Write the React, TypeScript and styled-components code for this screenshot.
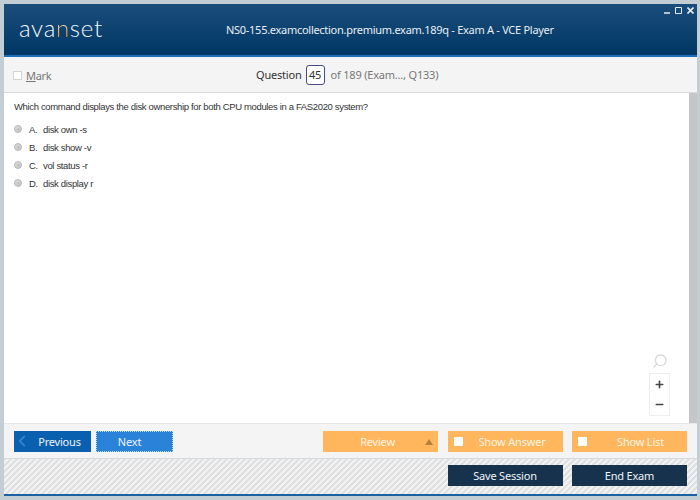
import React from 'react';
import styled, { createGlobalStyle } from 'styled-components';
import { ChevronLeft, Minus, Plus, Search } from 'lucide-react';

const GlobalStyle = createGlobalStyle`
	html,
	body {
		margin: 0;
		padding: 0;
		width: 700px;
		height: 500px;
		overflow: hidden;
		background: #c2ced4;
	}

	* {
		box-sizing: border-box;
	}
`;

const uiFont = `'Noto Sans', 'Open Sans', sans-serif`;

const Page = styled.div`
	width: 700px;
	height: 500px;
	padding: 4px 3px 4px 4px;
	font-family: ${uiFont};
`;

const Window = styled.div`
	height: 492px;
	display: flex;
	flex-direction: column;
	background: #fff;
`;

const Header = styled.header`
	height: 53px;
	flex: none;
	position: relative;
	display: flex;
	align-items: center;
	background: linear-gradient(180deg, #1b4d7b 0%, #003764 100%);
	border-bottom: 2px solid #1b6fb8;
`;

const Logo = styled.div`
	width: 222px;
	padding: 0 0 4px 15px;
	font-family: 'Lato', sans-serif;
	font-weight: 300;
	font-size: 24px;
	line-height: 30px;
	letter-spacing: 0.7px;
	color: #f2f6f9;

	span {
		background: linear-gradient(180deg, #f4e2c0 35%, #f09a20 75%);
		-webkit-background-clip: text;
		background-clip: text;
		color: transparent;
	}
`;

const Title = styled.h1`
	margin: 0;
	font-size: 11px;
	font-weight: 400;
	letter-spacing: -0.28px;
	color: #e8eef3;
	white-space: nowrap;
`;

const WindowControls = styled.div`
	position: absolute;
	top: 3px;
	right: 3px;
	display: flex;
	align-items: flex-end;
	gap: 5px;
	color: #e6edf2;

	svg {
		display: block;
	}
`;

const Toolbar = styled.div`
	height: 36px;
	flex: none;
	display: flex;
	align-items: center;
	background: #f4f4f4;
	border-bottom: 1px solid #dcdcdc;
`;

const MarkLabel = styled.label`
	width: 252px;
	padding: 1px 0 0 9px;
	display: flex;
	align-items: center;
	gap: 4px;
	font-size: 11px;
	letter-spacing: -0.3px;
	color: #777;

	u {
		text-underline-offset: 1px;
	}
`;

const MarkBox = styled.span`
	width: 9px;
	height: 9px;
	background: #fff;
	border: 1px solid #d4d4d4;
`;

const Counter = styled.div`
	display: flex;
	align-items: center;
	font-size: 11px;
	letter-spacing: -0.2px;
	color: #777;
	white-space: nowrap;

	b {
		font-weight: 400;
		color: #333;
	}
`;

const CurrentNumber = styled.span`
	width: 19px;
	height: 20px;
	margin: 0 6px 0 4px;
	display: flex;
	align-items: center;
	justify-content: center;
	font-size: 11px;
	color: #333;
	background: #fff;
	border: 1px solid #4a4a80;
	border-radius: 3px;
`;

const Body = styled.div`
	flex: 1;
	display: flex;
	min-height: 0;
`;

const Content = styled.main`
	flex: 1;
	position: relative;
	padding: 8px 10px;
	font-family: 'Liberation Sans', Arial, sans-serif;
	font-size: 9.5px;
	letter-spacing: -0.35px;
	color: #333;
`;

const Scrollbar = styled.div`
	width: 8px;
	flex: none;
	background: #c6c6c6;
`;

const Prompt = styled.p`
	margin: 0 0 10px;
	line-height: 12px;
`;

const Answers = styled.ul`
	margin: 0;
	padding: 0;
	list-style: none;
	display: flex;
	flex-direction: column;
	gap: 6px;
`;

const Answer = styled.li`
	height: 12px;
	display: flex;
	align-items: center;
`;

const Radio = styled.span`
	width: 8px;
	height: 8px;
	margin-right: 7px;
	border-radius: 50%;
	border: 1px solid #b4b4b4;
	background: radial-gradient(circle at 60% 60%, #bcbcbc, #ececec);
`;

const Letter = styled.span`
	width: 14px;
`;

const ZoomTools = styled.div`
	position: absolute;
	right: 19px;
	bottom: 7px;
	width: 21px;
	display: flex;
	flex-direction: column;
	align-items: center;
`;

const ZoomBox = styled.div`
	width: 21px;
	height: 43px;
	margin-top: 4px;
	display: flex;
	flex-direction: column;
	align-items: center;
	justify-content: space-around;
	color: #444;
	border: 1px solid #eee;
`;

const ActionBar = styled.div`
	height: 36px;
	flex: none;
	display: flex;
	align-items: center;
	justify-content: space-between;
	padding: 0 10px;
	background: #f4f4f4;
	border-top: 1px solid #e6e6e6;
	border-bottom: 1px solid #d4dbe0;
`;

const ButtonGroup = styled.div<{ $gap: number }>`
	display: flex;
	gap: ${(p) => p.$gap}px;
`;

const Button = styled.button<{ $w: number; $kind: 'previous' | 'next' | 'orange' | 'navy'; $shift?: number }>`
	width: ${(p) => p.$w}px;
	height: 21px;
	position: relative;
	padding: 0 ${(p) => Math.max(-(p.$shift ?? 0) * 2, 0)}px 0 ${(p) => Math.max((p.$shift ?? 0) * 2, 0)}px;
	font-family: ${uiFont};
	font-size: 11px;
	letter-spacing: -0.2px;
	color: ${(p) => (p.$kind === 'orange' ? '#fdf3e2' : '#eef4f9')};
	background: ${(p) =>
		p.$kind === 'previous' ? '#0a5fae' : p.$kind === 'next' ? '#2a83d8' : p.$kind === 'orange' ? '#ffb65c' : '#17324d'};
	border: ${(p) => (p.$kind === 'next' ? '1px dotted #bcd8f2' : 'none')};
`;

const ButtonIcon = styled.span`
	position: absolute;
	left: -1px;
	top: 50%;
	transform: translateY(-50%);
	display: flex;
	color: #2a83d8;
`;

const CheckMark = styled.span`
	position: absolute;
	left: 6px;
	top: 6px;
	width: 9px;
	height: 9px;
	border-radius: 1px;
	background: #fff;
`;

const ReviewArrow = styled.span`
	position: absolute;
	right: 5px;
	top: 8px;
	width: 0;
	height: 0;
	border-left: 4px solid transparent;
	border-right: 4px solid transparent;
	border-bottom: 6px solid #b5803c;
`;

const Footer = styled.footer`
	height: 37px;
	flex: none;
	display: flex;
	align-items: center;
	justify-content: flex-end;
	padding: 0 10px 2px;
	background-color: #f2f2f2;
	background-image: linear-gradient(
		135deg,
		#e0e0e0 0 17%,
		transparent 17% 50%,
		#e0e0e0 50% 67%,
		transparent 67% 100%
	);
	background-size: 6px 6px;
	border-bottom: 2px solid #1b62a5;
`;

const answers = [
	['A.', 'disk own -s'],
	['B.', 'disk show -v'],
	['C.', 'vol status -r'],
	['D.', 'disk display r'],
];

const App = (): React.FunctionComponentElement<JSX.Element> => {
	return (
		<Page>
			<GlobalStyle />
			<Window>
				<Header>
					<Logo>
						ava<span>n</span>set
					</Logo>
					<Title>NS0-155.examcollection.premium.exam.189q - Exam A - VCE Player</Title>
					<WindowControls>
						<svg width="6" height="3" viewBox="0 0 6 3">
							<path d="M0 2h6" stroke="currentColor" strokeWidth="1.5" />
						</svg>
						<svg width="7" height="7" viewBox="0 0 7 7" fill="none">
							<path d="M.5.5h6v6h-6z" stroke="currentColor" />
						</svg>
						<svg width="7" height="7" viewBox="0 0 7 7">
							<path d="M.5.5l6 6M6.5.5l-6 6" stroke="currentColor" strokeWidth="1.6" />
						</svg>
					</WindowControls>
				</Header>
				<Toolbar>
					<MarkLabel>
						<MarkBox />
						<span>
							<u>M</u>ark
						</span>
					</MarkLabel>
					<Counter>
						<b>Question</b>
						<CurrentNumber>45</CurrentNumber>
						of 189 (Exam..., Q133)
					</Counter>
				</Toolbar>
				<Body>
					<Content>
						<Prompt>Which command displays the disk ownership for both CPU modules in a FAS2020 system?</Prompt>
						<Answers>
							{answers.map(([letter, text]) => (
								<Answer key={letter}>
									<Radio />
									<Letter>{letter}</Letter>
									{text}
								</Answer>
							))}
						</Answers>
						<ZoomTools>
							<Search size={16} color="#d8d8d8" style={{ transform: 'scaleX(-1)' }} />
							<ZoomBox>
								<Plus size={11} strokeWidth={3.5} />
								<Minus size={11} strokeWidth={3.5} />
							</ZoomBox>
						</ZoomTools>
					</Content>
					<Scrollbar />
				</Body>
				<ActionBar>
					<ButtonGroup $gap={5}>
						<Button $w={77} $kind="previous" $shift={7}>
							<ButtonIcon>
								<ChevronLeft size={18} strokeWidth={2.5} />
							</ButtonIcon>
							Previous
						</Button>
						<Button $w={77} $kind="next" $shift={-5}>
							Next
						</Button>
					</ButtonGroup>
					<ButtonGroup $gap={9.5}>
						<Button $w={115} $kind="orange" $shift={-3}>
							Review
							<ReviewArrow />
						</Button>
						<Button $w={115} $kind="orange" $shift={7}>
							<CheckMark />
							Show Answer
						</Button>
						<Button $w={115} $kind="orange" $shift={11}>
							<CheckMark />
							Show List
						</Button>
					</ButtonGroup>
				</ActionBar>
				<Footer>
					<ButtonGroup $gap={9.5}>
						<Button $w={115} $kind="navy">
							Save Session
						</Button>
						<Button $w={115} $kind="navy">
							End Exam
						</Button>
					</ButtonGroup>
				</Footer>
			</Window>
		</Page>
	);
};

export default App;
